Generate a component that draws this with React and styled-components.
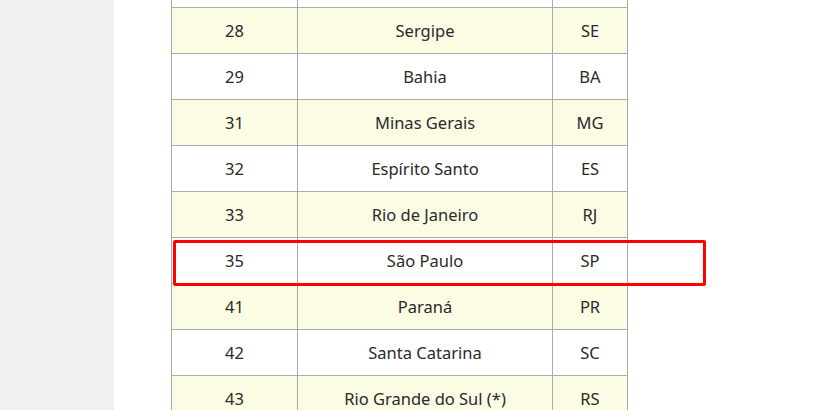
import React from "react";
import styled, { createGlobalStyle } from "styled-components";

const Global = createGlobalStyle`
  html, body { margin: 0; padding: 0; background: #ffffff; overflow: hidden; }
  body { font-family: "Noto Sans", "DejaVu Sans", sans-serif; }
`;

const Page = styled.div`
  display: flex;
  width: 814px;
  height: 410px;
  overflow: hidden;
`;

const Sidebar = styled.div`
  width: 114px;
  flex: 0 0 114px;
  background: #f0f0f0;
`;

const Main = styled.div`
  flex: 1;
  background: #ffffff;
  padding-left: 57px;
`;

const TableWrap = styled.div`
  position: relative;
  margin-top: -39px;
  width: 457px;
`;

const Table = styled.table`
  border-collapse: collapse;
  width: 457px;
  table-layout: fixed;
  color: #2a2a2a;
  font-size: 16.5px;
  font-weight: 450;
`;

const Row = styled.tr`
  background: ${(p) => (p.$alt ? "#fcfbe4" : "#ffffff")};
  height: 46px;
`;

const Cell = styled.td`
  border: 1px solid #aaaaaa;
  text-align: center;
  vertical-align: middle;
  padding: 0 4px;
  height: 45px;
  box-sizing: border-box;
  line-height: 20px;
`;

const Highlight = styled.div`
  position: absolute;
  left: 2px;
  top: ${(p) => p.$top}px;
  width: 533px;
  height: 46px;
  box-sizing: border-box;
  border: 3px solid #ff0000;
  border-radius: 2px;
  pointer-events: none;
`;

const rows = [
  ["", "", ""],
  ["28", "Sergipe", "SE"],
  ["29", "Bahia", "BA"],
  ["31", "Minas Gerais", "MG"],
  ["32", "Espírito Santo", "ES"],
  ["33", "Rio de Janeiro", "RJ"],
  ["35", "São Paulo", "SP"],
  ["41", "Paraná", "PR"],
  ["42", "Santa Catarina", "SC"],
  ["43", "Rio Grande do Sul (*)", "RS"],
];

export default function App() {
  return (
    <>
      <Global />
      <Page>
        <Sidebar />
        <Main>
          <TableWrap>
            <Table>
              <colgroup>
                <col style={{ width: 126 }} />
                <col style={{ width: 255 }} />
                <col style={{ width: 75 }} />
              </colgroup>
              <tbody>
                {rows.map((r, i) => (
                  <Row key={i} $alt={i % 2 === 1}>
                    <Cell>{r[0]}</Cell>
                    <Cell>{r[1]}</Cell>
                    <Cell>{r[2]}</Cell>
                  </Row>
                ))}
              </tbody>
            </Table>
            <Highlight $top={279} />
          </TableWrap>
        </Main>
      </Page>
    </>
  );
}
